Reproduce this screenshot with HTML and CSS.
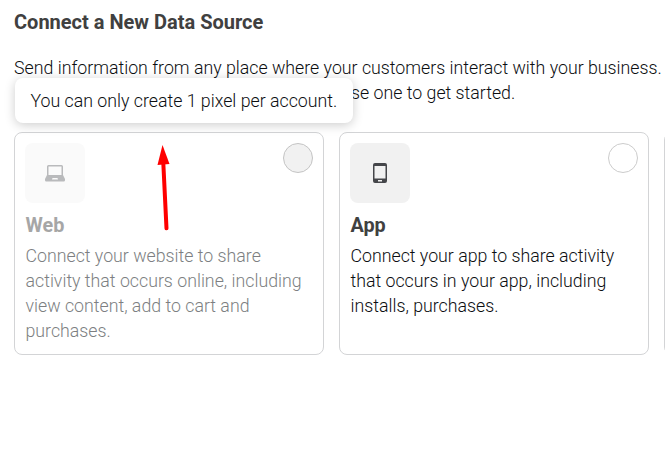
FILE: index.html
```html
<!DOCTYPE html>
<html lang="en">
<head>
<meta charset="utf-8">
<title>Connect a New Data Source</title>
<link rel="stylesheet" href="styles.css">
</head>
<body>
<main class="page">
  <h1 class="title">Connect a New Data Source</h1>
  <div class="intro">
    <p class="intro-text">Send information from any place where your customers interact with your business.</p>
    <p class="intro-text intro-end">se one to get started.</p>
    <div class="tooltip" role="tooltip">You can only create 1 pixel per account.</div>
    <svg class="arrow" width="24" height="90" viewBox="0 0 24 90"><path d="M11.300 18L14.500 83.300" fill="none" stroke="#f00" stroke-width="4" stroke-linecap="round"/><path d="M10.500 0L17.500 19L5.500 20Z" fill="#f00"/></svg>
  </div>
  <div class="cards">
    <section class="card disabled">
      <div class="card-top">
        <div class="icon"><svg width="20" height="20" viewBox="0 0 20 20"><path fill-rule="evenodd" d="M3.500 2h13q1.500 0 1.500 1.500V12l2 4v1.200q0 1.300-1.300 1.300H1.300Q0 18.500 0 17.200V16l2-4V3.500Q2 2 3.500 2zM3.500 3.500V12h13V3.500zM7.500 15l-.5 1.500h6l-.5-1.500z"/></svg></div>
        <span class="radio"></span>
      </div>
      <h2 class="name">Web</h2>
      <p class="desc">Connect your website to share<br>activity that occurs online, including<br>view content, add to cart and<br>purchases.</p>
    </section>
    <section class="card">
      <div class="card-top">
        <div class="icon"><svg width="20" height="20" viewBox="0 0 20 20"><path fill-rule="evenodd" d="M5 0h10q2 0 2 2v16q0 2-2 2H5q-2 0-2-2V2q0-2 2-2zM4.500 3v12.500h11V3zM8 17v1.500h4V17z"/></svg></div>
        <span class="radio"></span>
      </div>
      <h2 class="name">App</h2>
      <p class="desc">Connect your app to share activity<br>that occurs in your app, including<br>installs, purchases.</p>
    </section>
    <section class="card"></section>
  </div>
</main>
</body>
</html>
```
FILE: styles.css
```css
* { box-sizing: border-box; }
body { margin: 0; overflow: hidden; background: #fff; color: #0c0e11; font: 360 17.76px/25px Roboto, sans-serif; }
h1, h2, p { margin: 0; }
.page { width: 665px; height: 460px; padding: 9px 0 0 14px; overflow: hidden; }
.title { font-size: 20px; line-height: 26px; font-weight: 700; color: #404040; }
.intro { position: relative; margin-top: 21px; height: 76px; }
.intro-text { white-space: nowrap; }
.intro-end { margin-left: 337px; }
.tooltip { position: absolute; left: 1px; top: 22px; width: 338px; height: 45px; padding: 11px 15.500px 9px; border-radius: 8px; background: #fff; box-shadow: 0 2px 11px rgba(0,0,0,.2); white-space: nowrap; }
.arrow { position: absolute; left: 138px; top: 89px; }
.cards { display: grid; grid-template-columns: repeat(3, 310px); gap: 15px; }
.card { height: 223px; padding: 10px; border: 1px solid #d3d4d6; border-radius: 8px; }
.card-top { display: flex; justify-content: space-between; }
.icon { display: flex; align-items: center; justify-content: center; width: 60px; height: 60px; border-radius: 8px; background: #f1f1f1; fill: #45464a; }
.radio { width: 30px; height: 30px; border: 1px solid #ccc; border-radius: 50%; }
.name { margin-top: 10px; padding-left: .5px; font-size: 19.8px; line-height: 26px; font-weight: 700; color: #404040; }
.desc { margin-top: 5px; padding-left: .5px; white-space: nowrap; }
.disabled { color: #7d7f82; }
.disabled .name { color: #a6a6a6; }
.disabled .icon { background: #fafafa; fill: #b9babc; }
.disabled .radio { background: #f1f1f1; border-color: #c4c4c4; }
```
